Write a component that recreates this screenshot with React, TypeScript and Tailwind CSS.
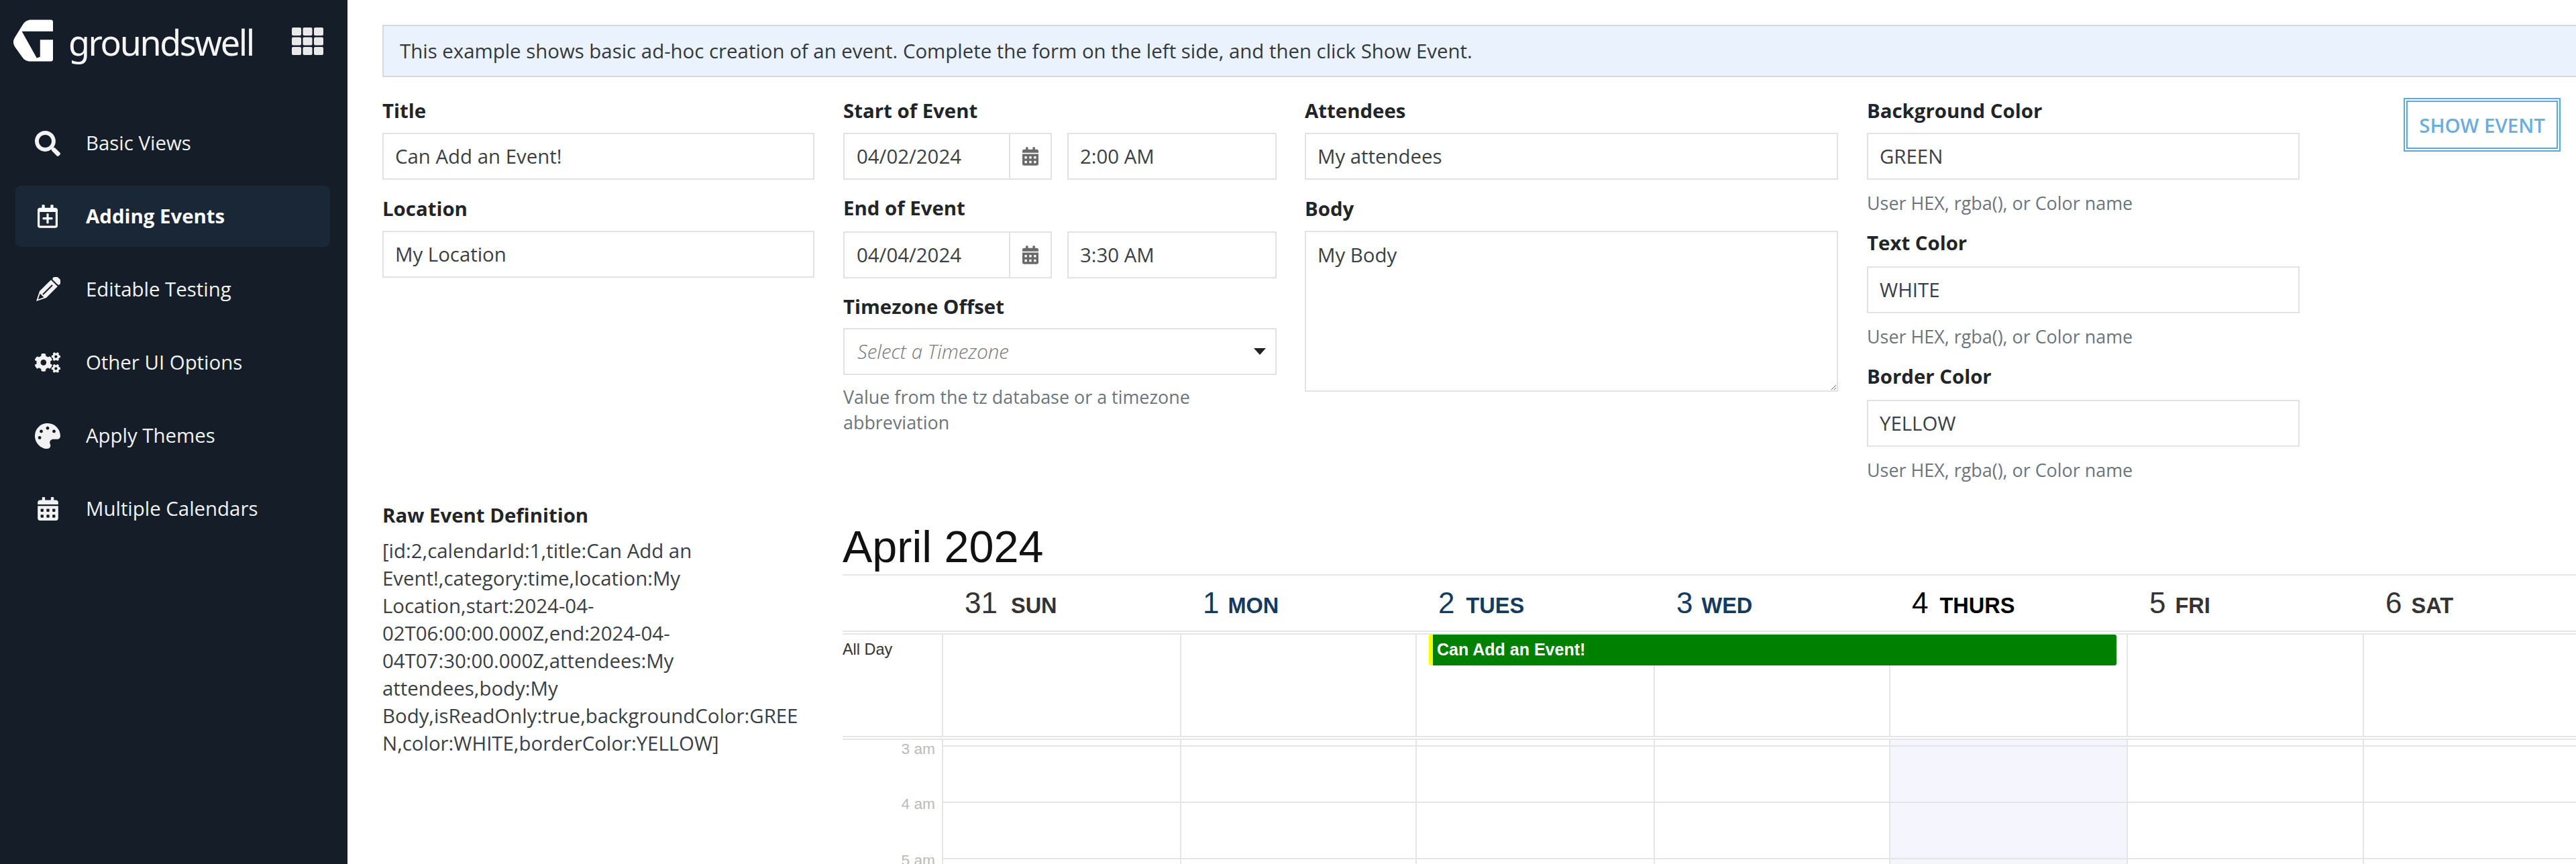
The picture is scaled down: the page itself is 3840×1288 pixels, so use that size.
import React from 'react';
import { FaSearch, FaRegCalendarPlus, FaCogs, FaPalette, FaCalendarAlt } from 'react-icons/fa';

const RAW_EVENT =
  '[id:2,calendarId:1,title:Can Add an Event!,category:time,location:My Location,start:2024-04-02T06:00:00.000Z,end:2024-04-04T07:30:00.000Z,attendees:My attendees,body:My Body,isReadOnly:true,backgroundColor:GREEN,color:WHITE,borderColor:YELLOW]';

const DAYS = [
  { num: '31', name: 'SUN', color: 'text-[#333333]', cell: 'w-[355px]', gap: 'ml-[20px]' },
  { num: '1', name: 'MON', color: 'text-[#133a5f]', cell: 'w-[351px]', gap: 'ml-[13px]' },
  { num: '2', name: 'TUES', color: 'text-[#133a5f]', cell: 'w-[355px]', gap: 'ml-[17px]' },
  { num: '3', name: 'WED', color: 'text-[#133a5f]', cell: 'w-[351px]', gap: 'ml-[13px]' },
  { num: '4', name: 'THURS', color: 'text-black', cell: 'w-[354px]', gap: 'ml-[17px]', today: true },
  { num: '5', name: 'FRI', color: 'text-[#333333]', cell: 'w-[352px]', gap: 'ml-[14px]' },
  { num: '6', name: 'SAT', color: 'text-[#333333]', cell: 'w-[353px]', gap: 'ml-[14px]' },
];

const PencilIcon = () => (
  <svg viewBox="0 0 38 38" className="w-[38px] h-[38px]">
    <g transform="rotate(45 19 19)">
      <rect x="12" y="-5" width="14" height="8" rx="2.5" fill="#f2f2f2" />
      <path d="M12 5h14v24l-7 14-7-14z" fill="#f2f2f2" />
      <rect x="18" y="9" width="2" height="20" fill="#151d28" />
      <path d="M15 31h8l-4 8z" fill="#151d28" />
    </g>
  </svg>
);

const GridIcon = () => (
  <svg viewBox="0 0 47 41" className="w-[47px] h-[41px]" fill="#e9e9e9">
    {[0, 16.5, 33].map(x =>
      [0, 14.5, 29].map(y => <rect key={`${x}-${y}`} x={x} y={y} width="14" height="12" rx="2" />)
    )}
  </svg>
);

const NAV = [
  { label: 'Basic Views', icon: <FaSearch className="w-[38px] h-[38px]" /> },
  { label: 'Adding Events', icon: <FaRegCalendarPlus className="w-[30px] h-[35px]" />, active: true },
  { label: 'Editable Testing', icon: <PencilIcon /> },
  { label: 'Other UI Options', icon: <FaCogs className="w-[38px] h-[31px]" /> },
  { label: 'Apply Themes', icon: <FaPalette className="w-[38px] h-[38px]" /> },
  { label: 'Multiple Calendars', icon: <FaCalendarAlt className="w-[31px] h-[35px]" /> },
];

// spacing differs a little from field to field, so each Label brings its own margins
const Label = ({ children, className = '' }: { children: React.ReactNode; className?: string }) => (
  <div className={`h-[38px] leading-[38px] font-bold text-[#212529] ${className}`}>{children}</div>
);

const TextInput = ({ value, className = '' }: { value: string; className?: string }) => (
  <input
    readOnly
    value={value}
    className={`block h-[70px] w-full border-2 border-[#e2e2e2] bg-white px-[17px] text-[#3a3f45] outline-none ${className}`}
  />
);

const Help = ({ children, className = 'mt-[16px]' }: { children: React.ReactNode; className?: string }) => (
  <div className={`text-[26.9px] leading-[38px] text-[#6c757d] ${className}`}>{children}</div>
);

const DateTime = ({ date, time }: { date: string; time: string }) => (
  <div className="flex gap-[23px]">
    <div className="flex h-[70px] w-[311px] border-2 border-[#e2e2e2]">
      <input readOnly value={date} className="min-w-0 flex-1 px-[18px] text-[#3a3f45] outline-none" />
      <div className="flex w-[62px] items-center justify-center border-l-2 border-[#e2e2e2] text-[#6a6a6a]">
        <FaCalendarAlt className="w-[24px] h-[28px]" />
      </div>
    </div>
    <TextInput value={time} className="flex-1 min-w-0" />
  </div>
);

const Sidebar = () => (
  <aside className="w-[518px] shrink-0 bg-[#151d28] text-[#f2f2f2]">
    <div className="flex h-[168px] items-start pl-[20px] pt-[29px]">
      <svg viewBox="30 28 178 190" className="w-[59px] h-[64px] shrink-0" fill="#ffffff">
        <path d="M198 28a10 10 0 0 1 10 10v42H68l67 120 15-5v-77h58v87a10 10 0 0 1-10 10h-93c-14 0-27-7-35-19L38 152c-11-18-11-29 0-47l36-58c8-12 21-19 35-19z" />
      </svg>
      <span className="ml-[23px] mt-[8px] font-['Noto_Sans',sans-serif] text-[52px] leading-[52px] tracking-[-2.4px] text-[#f5f5f5]">
        groundswell
      </span>
      <div className="ml-auto mr-[36px] mt-[12px]">
        <GridIcon />
      </div>
    </div>
    <nav className="flex flex-col gap-[18px] pl-[23px] pr-[26px]">
      {NAV.map(item => (
        <div
          key={item.label}
          className={`flex h-[91px] items-center rounded-lg pl-[29px] ${item.active ? 'bg-[#192737] font-bold text-white' : ''}`}
        >
          <span className="flex w-[38px] shrink-0 items-center justify-center">{item.icon}</span>
          <span className="ml-[38px]">{item.label}</span>
        </div>
      ))}
    </nav>
  </aside>
);

const Calendar = () => (
  <section className="min-w-0 flex-1 overflow-hidden font-['Liberation_Sans',Arial,sans-serif]">
    <h1 className="mt-[28px] mb-[3px] text-[66.5px] leading-[76px] text-[#111111]">April 2024</h1>
    <div className="w-[2800px]">
      <div className="flex h-[90px] border-t-2 border-b-[6px] border-double border-t-[#e5e5e5] border-b-[#e5e5e5] [border-top-style:solid]">
        <div className="w-[148px] shrink-0" />
        {DAYS.map(d => (
          <div key={d.num} className={`${d.cell} flex shrink-0 items-baseline pl-[34px] pt-[19px] ${d.color}`}>
            <span className="text-[44px] leading-[44px]">{d.num}</span>
            <span className={`${d.gap} text-[32.5px] font-bold leading-[44px]`}>{d.name}</span>
          </div>
        ))}
      </div>

      <div className="relative flex h-[157px] border-b-[6px] border-double border-[#e5e5e5]">
        <div className="w-[148px] shrink-0 pt-[10px] text-[23.4px] leading-[24px] text-[#333333]">All Day</div>
        {DAYS.map(d => (
          <div key={d.num} className={`${d.cell} shrink-0 border-l-2 border-[#e5e5e8]`} />
        ))}
        <div className="absolute left-[874px] top-0 flex h-[46px] w-[1025px] items-center rounded-[3px] border-l-[6px] border-[#ffff00] bg-[#008000] pl-[6px] text-[25px] font-bold text-white">
          Can Add an Event!
        </div>
      </div>

      <div className="flex">
        <div className="w-[148px] shrink-0 pr-[10px] pt-[1px] text-right text-[22.7px] leading-[24px] text-[#bbbbbb]">
          <div className="h-[82px]">3 am</div>
          <div className="h-[84px]">4 am</div>
          <div className="h-[84px]">5 am</div>
        </div>
        {DAYS.map(d => (
          <div key={d.num} className={`${d.cell} shrink-0 border-l-2 border-[#e5e5e8] ${d.today ? 'bg-[#f5f5fd]' : ''}`}>
            <div className="h-[10px] border-b-2 border-[#e5e5e8]" />
            <div className="h-[84px] border-b-2 border-[#e5e5e8]" />
            <div className="h-[84px] border-b-2 border-[#e5e5e8]" />
          </div>
        ))}
      </div>
    </div>
  </section>
);

export default function App() {
  return (
    <div className="flex h-[1288px] w-[3840px] overflow-hidden bg-white font-['Open_Sans','Noto_Sans',sans-serif] text-[29.4px] text-[#212529]">
      <Sidebar />
      <main className="min-w-0 flex-1 overflow-hidden pl-[52px] pt-[37px]">
        <div className="flex h-[78px] items-center border-2 border-r-0 border-[#d6dade] bg-[#eaf2fd] pl-[24px] text-[#33383d]">
          This example shows basic ad-hoc creation of an event. Complete the form on the left side, and then click Show
          Event.
        </div>

        <div className="mt-[31px] flex">
          <div className="w-[644px] shrink-0">
            <Label className="mb-[14px]">Title</Label>
            <TextInput value="Can Add an Event!" />
            <Label className="mt-[24px] mb-[14px]">Location</Label>
            <TextInput value="My Location" />
          </div>

          <div className="ml-[43px] w-[646px] shrink-0">
            <Label className="mb-[14px]">Start of Event</Label>
            <DateTime date="04/02/2024" time="2:00 AM" />
            <Label className="mt-[23px] mb-[16px]">End of Event</Label>
            <DateTime date="04/04/2024" time="3:30 AM" />
            <Label className="mt-[23px] mb-[13px]">Timezone Offset</Label>
            <div className="flex h-[70px] items-center justify-between border-2 border-[#e2e2e2] pl-[19px] pr-[14px]">
              <span className="font-light italic text-[#777777]">Select a Timezone</span>
              <span className="h-0 w-0 border-x-[9px] border-t-[10px] border-x-transparent border-t-[#222222]" />
            </div>
            <Help className="mt-[14px]">Value from the tz database or a timezone abbreviation</Help>
          </div>

          <div className="ml-[42px] w-[795px] shrink-0">
            <Label className="mb-[14px]">Attendees</Label>
            <TextInput value="My attendees" />
            <Label className="mt-[24px] mb-[14px]">Body</Label>
            <textarea
              readOnly
              value="My Body"
              className="block h-[240px] w-full border-2 border-[#e2e2e2] px-[17px] py-[12px] text-[#3a3f45] outline-none"
            />
          </div>

          <div className="ml-[43px] w-[645px] shrink-0">
            <Label className="mb-[14px]">Background Color</Label>
            <TextInput value="GREEN" />
            <Help>User HEX, rgba(), or Color name</Help>
            <Label className="mt-[21px] mb-[16px]">Text Color</Label>
            <TextInput value="WHITE" />
            <Help>User HEX, rgba(), or Color name</Help>
            <Label className="mt-[21px] mb-[16px]">Border Color</Label>
            <TextInput value="YELLOW" />
            <Help>User HEX, rgba(), or Color name</Help>
          </div>

          <div className="ml-[155px]">
            <button className="h-[80px] w-[234px] border-[6px] border-double border-[#5aa9dd] pt-[2px] text-[29.4px] font-semibold text-[#6aaede]">
              SHOW EVENT
            </button>
          </div>
        </div>

        <div className="mt-[29px] flex">
          <div className="w-[644px] shrink-0">
            <Label className="mb-[14px]">Raw Event Definition</Label>
            <p className="w-[630px] text-[#3a3f45] leading-[41px] [overflow-wrap:anywhere]">{RAW_EVENT}</p>
          </div>
          <div className="ml-[42px] min-w-0 flex-1">
            <Calendar />
          </div>
        </div>
      </main>
    </div>
  );
}
